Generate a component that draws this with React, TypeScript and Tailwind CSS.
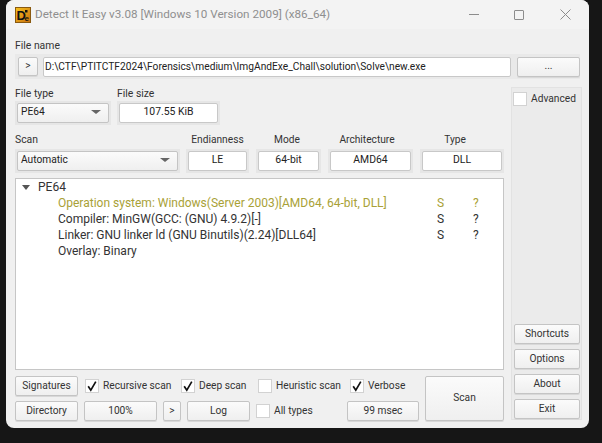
import type { ReactNode } from "react";

const BTN =
  "flex items-center justify-center shrink-0 rounded-[2px] border border-[#c4c4c4] bg-gradient-to-b from-[#fbfbfb] to-[#efefef] shadow-[0_1px_0_#d8d8d8] text-[#333] text-[10.2px] leading-none";

function Btn({ className, children }: { className: string; children: ReactNode }) {
  return <div className={`${BTN} ${className}`}>{children}</div>;
}

/** Read-only field sitting inside its pale groove */
function Field({ width, value }: { width: string; value: string }) {
  return (
    <div className={`${width} h-[24px] shrink-0 bg-[#e6e6e6] p-[2px]`}>
      <div className="h-full rounded-[2px] border border-[#c8c8c8] bg-white flex items-center justify-center pb-[2px] text-[10.4px] text-[#222]">
        {value}
      </div>
    </div>
  );
}

function Select({ width, value }: { width: string; value: string }) {
  return (
    <div className={`${width} h-[24px] shrink-0 bg-[#e6e6e6] p-[2px]`}>
      <div className="h-full rounded-[2px] border border-[#c4c4c4] bg-gradient-to-b from-[#fbfbfb] to-[#efefef] flex items-center justify-between pb-[2px] pl-[3px] pr-[7px] text-[10.2px] text-[#222]">
        <span>{value}</span>
        <span className="w-0 h-0 border-x-[5px] border-x-transparent border-t-[4px] border-t-[#666]" />
      </div>
    </div>
  );
}

function Check({ checked = false, label, className = "" }: { checked?: boolean; label?: string; className?: string }) {
  return (
    <div className={`flex items-center gap-[4px] shrink-0 whitespace-nowrap text-[10.2px] text-[#333] ${className}`}>
      <div className="w-[14px] h-[14px] shrink-0 border border-[#d2d2d2] bg-white flex items-center justify-center">
        {checked && (
          <svg width="12" height="12" viewBox="0 0 12 12" fill="none">
            <path d="M2.2 6.2 L4.8 10.2 L9.8 1.6" stroke="#111" strokeWidth="1.7" />
          </svg>
        )}
      </div>
      {label && <span>{label}</span>}
    </div>
  );
}

function Heading({ width, children }: { width: string; children: ReactNode }) {
  return <div className={`${width} shrink-0 text-center text-[10.2px] text-[#333]`}>{children}</div>;
}

function Logo() {
  return (
    <svg width="16" height="16" viewBox="0 0 16 16">
      <defs>
        <linearGradient id="logoBg" x1="0" y1="0" x2="1" y2="1">
          <stop offset="0" stopColor="#f7c21e" />
          <stop offset="1" stopColor="#c9700f" />
        </linearGradient>
      </defs>
      <rect x="0.5" y="0.5" width="15" height="15" fill="url(#logoBg)" stroke="#8a5a10" />
      <text x="1.5" y="13" fontSize="13" fontWeight="700" fontFamily="Liberation Sans" fill="#111">D</text>
      <text x="9.5" y="14" fontSize="8" fontWeight="700" fontFamily="Liberation Sans" fill="#111">e</text>
      <rect x="10" y="3" width="2.5" height="2.5" fill="#111" />
    </svg>
  );
}

const RESULTS = [
  { text: "Operation system: Windows(Server 2003)[AMD64, 64-bit, DLL]", color: "text-[#a9a136]", flags: true },
  { text: "Compiler: MinGW(GCC: (GNU) 4.9.2)[-]", color: "text-[#333]", flags: true },
  { text: "Linker: GNU linker ld (GNU Binutils)(2.24)[DLL64]", color: "text-[#333]", flags: true },
  { text: "Overlay: Binary", color: "text-[#333]", flags: false },
];

export default function App() {
  return (
    <div className="w-[602px] h-[443px] overflow-hidden bg-[#161616] pl-[6px] font-['Roboto',sans-serif]">
      <div className="w-[583px] h-[428px] rounded-[8px] overflow-hidden bg-[#f0f0f0]">
        {/* Title bar */}
        <div className="h-[29px] bg-[#f3f3f3] flex items-center pl-[9px]">
          <Logo />
          <span className="ml-[4px] text-[11.7px] text-[#8f8f8f] whitespace-nowrap">
            Detect It Easy v3.08 [Windows 10 Version 2009] (x86_64)
          </span>
          <div className="ml-auto flex items-center">
            <div className="w-[10px] h-px bg-[#8c8c8c]" />
            <div className="ml-[35px] w-[10px] h-[10px] rounded-[1px] border border-[#8c8c8c]" />
            <svg className="ml-[36px] mr-[18px]" width="11" height="11" viewBox="0 0 11 11">
              <path d="M0.5 0.5 L10.5 10.5 M10.5 0.5 L0.5 10.5" stroke="#8c8c8c" />
            </svg>
          </div>
        </div>

        <div className="px-[9px]">
          <div className="mt-[9px] h-[16px] flex items-center text-[10.4px] text-[#333]">File name</div>
          {/* File name row */}
          <div className="h-[25px] bg-[#e9e9e9] flex items-center pl-[3px] pr-[3px]">
            <Btn className="w-[20px] h-[19px]">&gt;</Btn>
            <div className="ml-[5px] w-[468px] h-[20px] shrink-0 rounded-[2px] border border-[#c8c8c8] bg-white flex items-center pl-[1px] text-[10.2px] text-[#222] whitespace-nowrap overflow-hidden">
              D:\CTF\PTITCTF2024\Forensics\medium\ImgAndExe_Chall\solution\Solve\new.exe
            </div>
            <Btn className="ml-[6px] w-[63px] h-[20px]">...</Btn>
          </div>

          <div className="mt-[8px] flex gap-[7px]">
            {/* Main column */}
            <div className="w-[489px] shrink-0">
              <div className="flex gap-[6px]">
                <div>
                  <div className="h-[14px] flex items-center text-[10.4px] text-[#333]">File type</div>
                  <Select width="w-[96px]" value="PE64" />
                </div>
                <div>
                  <div className="h-[14px] flex items-center text-[10.4px] text-[#333]">File size</div>
                  <Field width="w-[103px]" value="107.55 KiB" />
                </div>
              </div>

              <div className="mt-[7px] h-[16px] flex items-center text-[10.4px] text-[#333]">
                <div className="w-[171px] shrink-0">Scan</div>
                <Heading width="w-[63px]">Endianness</Heading>
                <Heading width="w-[72px] pl-[4px]">Mode</Heading>
                <Heading width="w-[92px]">Architecture</Heading>
                <Heading width="w-[84px]">Type</Heading>
              </div>
              <div className="mt-[1px] flex">
                <Select width="w-[165px]" value="Automatic" />
                <Field width="w-[63px] ml-[6px]" value="LE" />
                <Field width="w-[65px] ml-[7px]" value="64-bit" />
                <Field width="w-[85px] ml-[7px]" value="AMD64" />
                <Field width="w-[84px] ml-[7px]" value="DLL" />
              </div>

              {/* Result tree */}
              <div className="mt-[5px] h-[192px] border border-[#c6c6c6] bg-white text-[12px] leading-[16px]">
                <div className="h-[16px] flex items-center pl-[6px] text-[#333]">
                  <span className="w-0 h-0 border-x-[4px] border-x-transparent border-t-[5px] border-t-[#555]" />
                  <span className="ml-[8px]">PE64</span>
                </div>
                {RESULTS.map((row) => (
                  <div key={row.text} className={`h-[16px] flex items-center pl-[42px] ${row.color}`}>
                    <span className="w-[379px] shrink-0 whitespace-nowrap">{row.text}</span>
                    {row.flags && <span className="w-[36px] shrink-0">S</span>}
                    {row.flags && <span>?</span>}
                  </div>
                ))}
              </div>

              {/* Bottom controls */}
              <div className="mt-[6px] flex justify-between">
                <div className="w-[404px] shrink-0">
                  <div className="h-[20px] flex items-center">
                    <Btn className="w-[63px] h-[20px]">Signatures</Btn>
                    <Check checked label="Recursive scan" className="ml-[7px] w-[96px]" />
                    <Check checked label="Deep scan" className="w-[77px]" />
                    <Check label="Heuristic scan" className="w-[92px]" />
                    <Check checked label="Verbose" />
                  </div>
                  <div className="mt-[5px] h-[20px] flex items-center">
                    <Btn className="w-[63px] h-[20px]">Directory</Btn>
                    <Btn className="ml-[6px] w-[73px] h-[20px]">100%</Btn>
                    <Btn className="ml-[6px] w-[18px] h-[20px]">&gt;</Btn>
                    <Btn className="ml-[6px] w-[63px] h-[20px]">Log</Btn>
                    <Check label="All types" className="ml-[6px] w-[91px]" />
                    <Btn className="w-[72px] h-[20px]">99 msec</Btn>
                  </div>
                </div>
                <Btn className="w-[79px] h-[45px]">Scan</Btn>
              </div>
            </div>

            {/* Side panel */}
            <div className="w-[71px] h-[333px] shrink-0 bg-[#ebebeb] border border-[#e2e2e2] px-[1px] flex flex-col">
              <Check label="Advanced" className="mt-[3px]" />
              <div className="mt-auto flex flex-col gap-[5px] pl-[1px]">
                <Btn className="w-[66px] h-[20px]">Shortcuts</Btn>
                <Btn className="w-[66px] h-[20px]">Options</Btn>
                <Btn className="w-[66px] h-[20px]">About</Btn>
                <Btn className="w-[66px] h-[20px]">Exit</Btn>
              </div>
            </div>
          </div>
        </div>
      </div>
    </div>
  );
}
